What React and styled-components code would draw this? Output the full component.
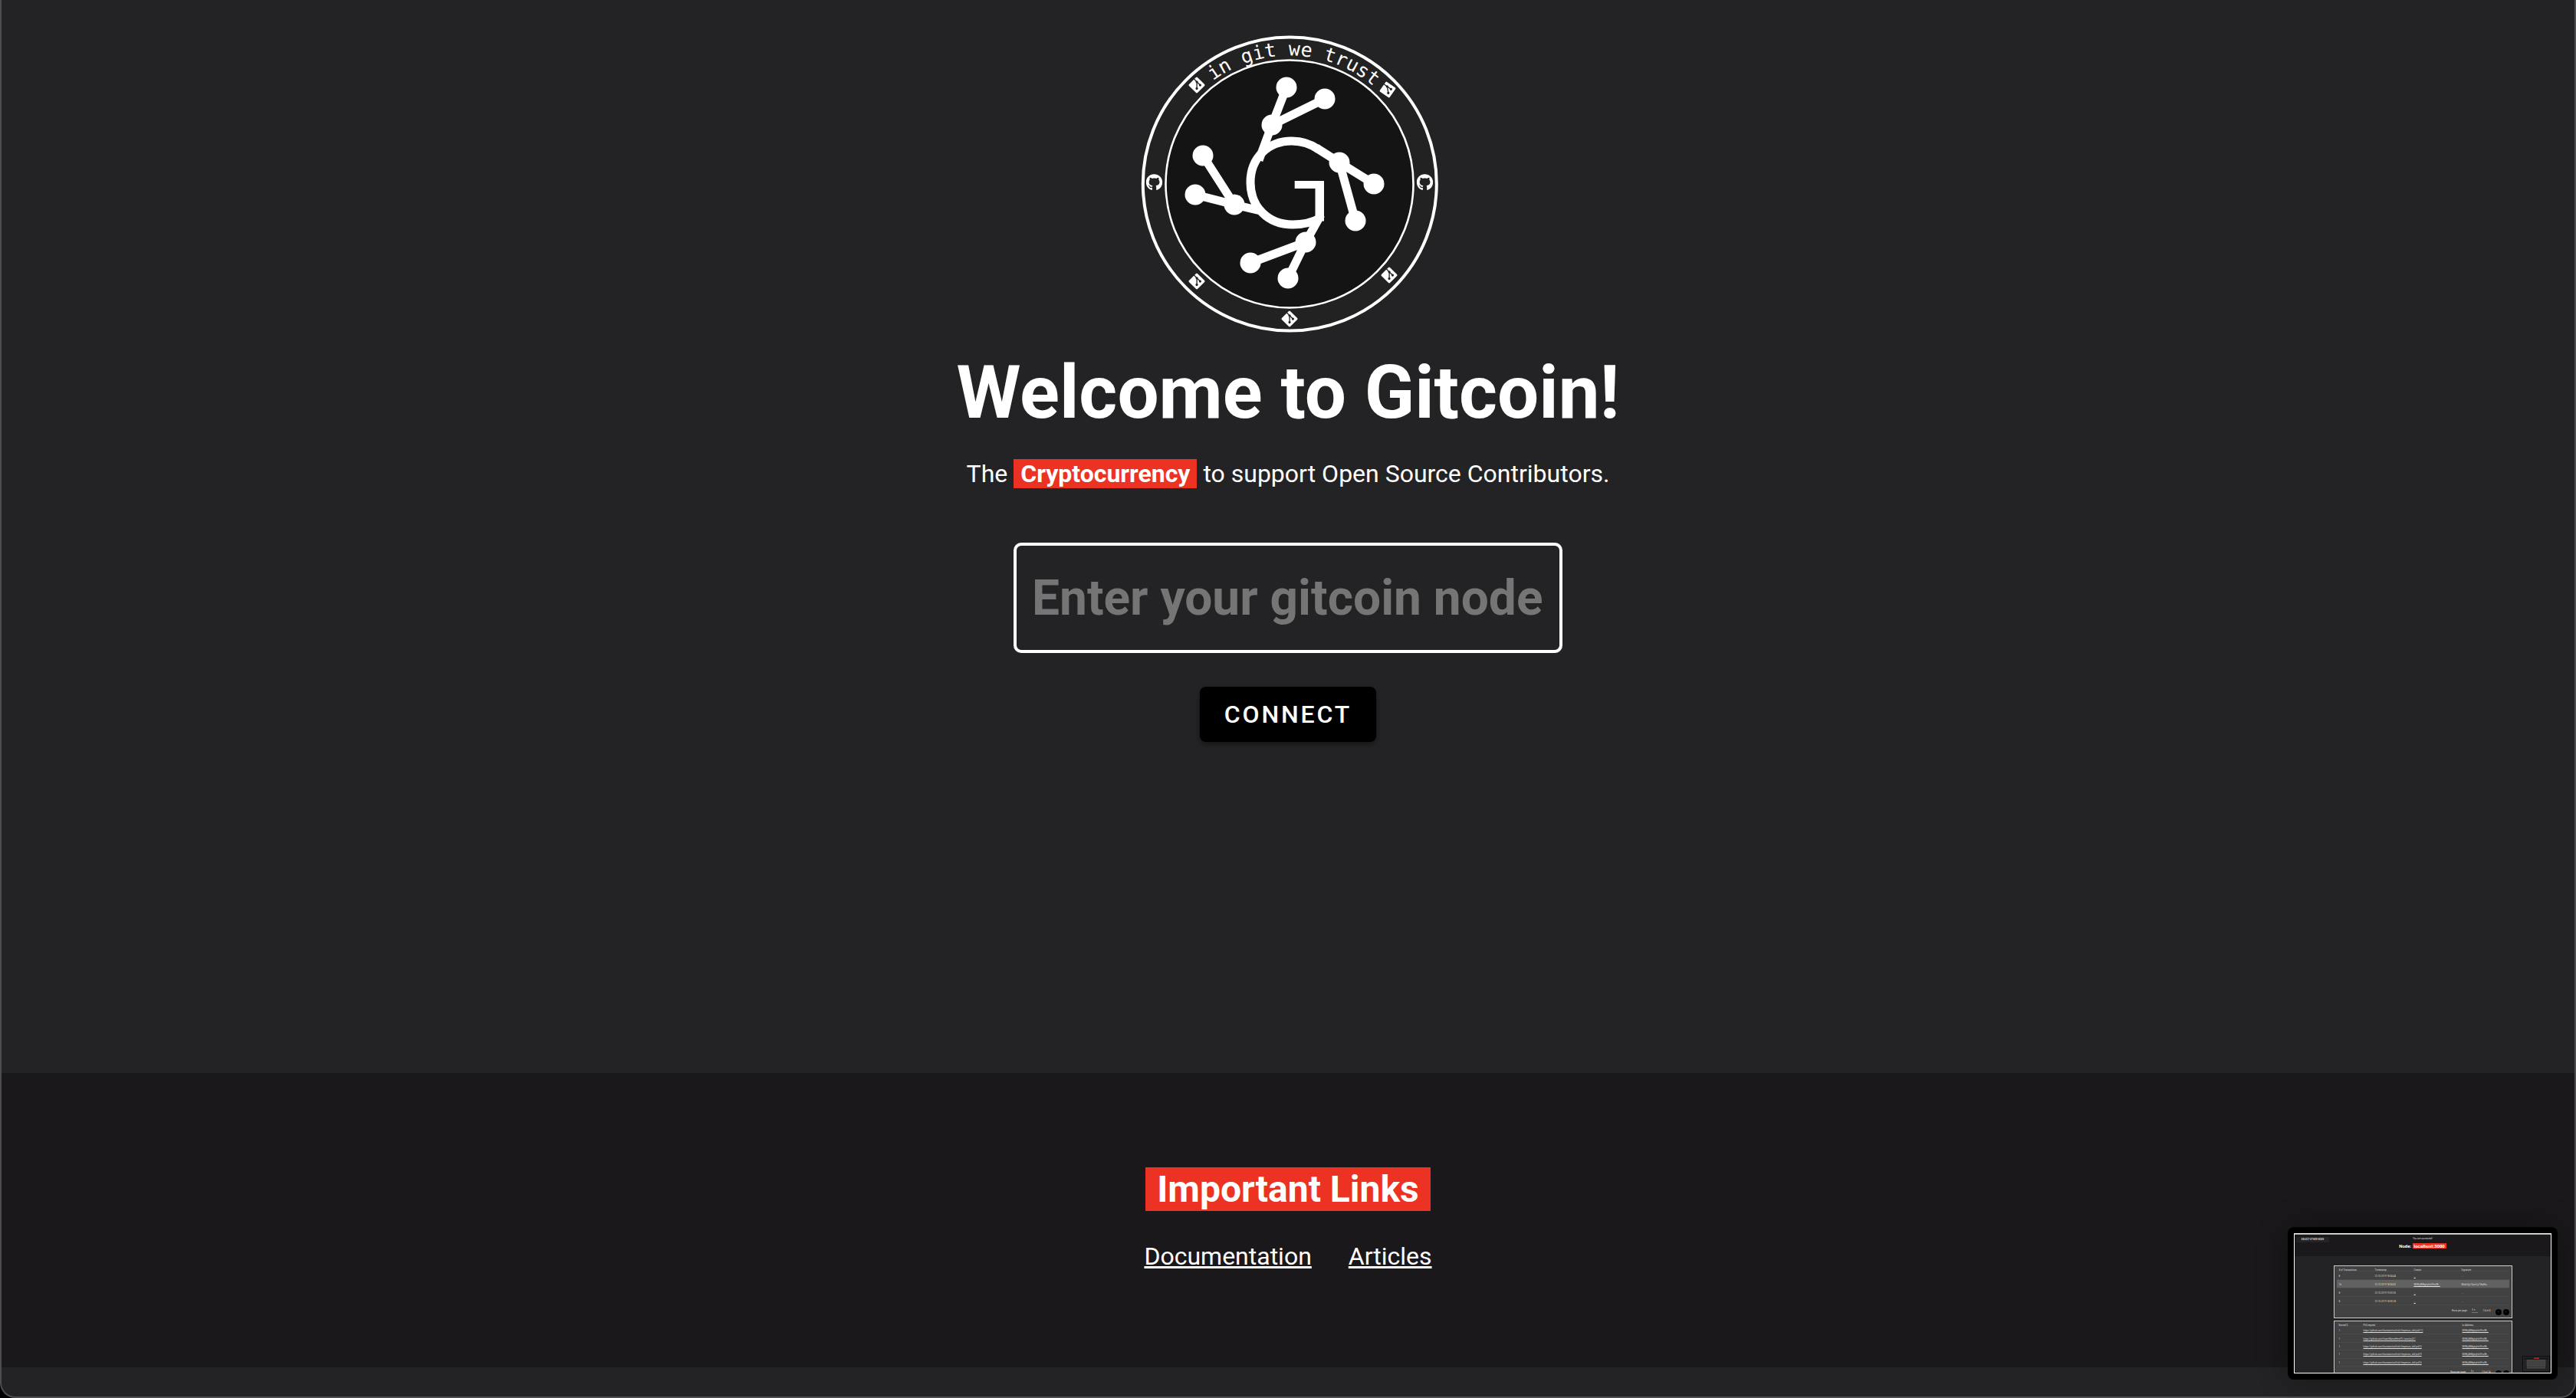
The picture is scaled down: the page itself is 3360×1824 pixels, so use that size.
import React from 'react';
import styled, { createGlobalStyle } from 'styled-components';
import { FaGitAlt, FaGithub } from 'react-icons/fa';


const GlobalStyle = createGlobalStyle`
  * {
    box-sizing: border-box;
  }

  body {
    margin: 0;
    background: #000;
    color: #fff;
    font-family: Roboto, sans-serif;
    font-size: 32px;
    line-height: 38px;
  }
`;

const Page = styled.div`
  position: relative;
  display: flex;
  flex-direction: column;
  min-height: 100vh;
  padding-bottom: 38px;
  border: 2px solid #4d4d4f;
  border-top: 0;
  border-radius: 0 0 20px 20px;
  background: #232325;
`;

const Main = styled.main`
  display: flex;
  flex: 1;
  flex-direction: column;
  align-items: center;
  padding: 46px 24px;
`;

const LogoSvg = styled.svg`
  width: 392px;
  height: 388px;

  text {
    fill: #fff;
    font-family: 'DejaVu Sans Mono', monospace;
    font-size: 25px;
  }
`;

const Title = styled.h1`
  margin: 22px 0 31px;
  font-size: 96px;
  font-weight: 700;
  line-height: 112px;
`;

const Intro = styled.p`
  margin: 0 0 71px;
`;

const Highlight = styled.span`
  padding: 0 ${({ $space }) => $space || 9}px;
  background: #ec3323;
  font-weight: 700;
`;

const NodeForm = styled.form`
  display: flex;
  flex-direction: column;
  align-items: center;
  gap: 44px;
`;

const NodeInput = styled.input`
  width: 716px;
  max-width: 100%;
  height: 144px;
  padding: 0 20px;
  border: 4px solid #fff;
  border-radius: 10px;
  outline: none;
  background: transparent;
  color: #fff;
  font-family: inherit;
  font-size: 64px;
  font-weight: 700;

  &::placeholder {
    color: #757575;
  }
`;

const ConnectButton = styled.button`
  height: 72px;
  padding: 0 32px;
  border: 0;
  border-radius: 8px;
  background: #000;
  box-shadow: 0 3px 6px rgba(0, 0, 0, 0.4);
  color: #fff;
  font-family: inherit;
  font-size: 32px;
  font-weight: 500;
  letter-spacing: 0.09em;
  text-transform: uppercase;
`;

const Footer = styled.footer`
  display: flex;
  flex-direction: column;
  align-items: center;
  padding: 124px 24px 126px;
  background: #1b181b;
`;

const FooterTitle = styled.h2`
  margin: 0 0 40px;
  font-size: 48px;
  line-height: 56px;
`;

const FooterLinks = styled.nav`
  display: flex;
  gap: 48px;

  a {
    color: #fff;
  }
`;

const Preview = styled.aside`
  position: absolute;
  right: 22px;
  bottom: 22px;
  width: 352px;
  height: 199px;
  padding: 8px;
  border-radius: 8px;
  background: #000;
  box-shadow: 0 0 40px rgba(0, 0, 0, 0.3);
`;

const Screen = styled.div`
  position: relative;
  height: 100%;
  overflow: hidden;
  border: 1px solid #fff;
  background: #232325;
  color: #ddd;
  font-size: 3px;
  line-height: 4px;
`;

const ScreenHeader = styled.header`
  display: grid;
  grid-template-columns: 1fr auto 1fr;
  height: 29px;
  padding: 3px 2px 0;
  border-top: 1px solid #999;
  background: #1b181b;
  text-align: center;
`;

const SmallButton = styled.button`
  justify-self: start;
  width: 43px;
  height: 7px;
  padding: 0;
  border: 0;
  border-radius: 1px;
  background: #232325;
  color: #ccc;
  font: 700 3px/7px Roboto, sans-serif;
  text-transform: uppercase;
`;

const Host = styled.h3`
  margin: 4px 0 0;
  color: #fff;
  font-size: 6px;
  line-height: 8px;
`;

const Panel = styled.section`
  width: 233px;
  margin: ${({ $first }) => ($first ? 12 : 3)}px auto 0;
  padding: 3px;
  border: 1px solid #ccc;
  background: #424242;

  table {
    width: 100%;
    height: ${({ $height }) => $height}px;
    border-collapse: collapse;
    table-layout: fixed;
  }

  th,
  td {
    padding: 0 3px;
    box-shadow: inset 0 -1px #4a4a4a;
    font-weight: 400;
    text-align: left;
    white-space: nowrap;
  }

  a {
    color: inherit;
  }
`;

const Row = styled.tr`
  background: ${({ $active }) => ($active ? '#616161' : 'transparent')};
`;

const Pager = styled.div`
  display: flex;
  align-items: center;
  justify-content: flex-end;
  height: 13px;

  label {
    margin-right: 6px;
  }

  select {
    width: 8px;
    height: 7px;
    margin-right: 6px;
    padding: 0;
    border: 0;
    border-bottom: 1px solid #777;
    appearance: none;
    background: transparent;
    color: inherit;
    font: 3px/4px Roboto, sans-serif;
  }

  span {
    margin-right: 4px;
  }

  button {
    align-self: flex-end;
    width: 8px;
    height: 8px;
    margin-left: 2px;
    padding: 0;
    border: 0;
    border-radius: 50%;
    background: #000;
    color: #aaa;
    font: 4px/8px Roboto, sans-serif;
  }
`;

const Nested = styled.svg`
  position: absolute;
  right: 1px;
  bottom: 1px;
  width: 36px;
  height: 21px;
`;


const nodes = [
  [190, 68], [240, 83], [171, 117],
  [81, 157], [71, 208], [122, 221],
  [259, 166], [304, 194], [280, 242],
  [215, 270], [143, 297], [192, 317],
];

const gitMarks = [
  [73, 65, 0], [322, 71, -10], [73, 321, 0], [324, 313, 0], [194, 370, 0],
];

const Logo = () => (
  <LogoSvg viewBox="-4 0 392 388" role="img" aria-label="Gitcoin">
    <circle cx="194.3" cy="194" r="191.5" fill="#222222" stroke="#fff" strokeWidth="4" />
    <circle cx="194" cy="194" r="161.5" fill="#141414" stroke="#fff" strokeWidth="2.6" />
    <path id="motto" d="M 56.5 98.5 A 167.5 167.5 0 0 1 332 98.5" fill="none" />
    <text textAnchor="middle" transform="rotate(2 194 194)">
      <textPath href="#motto" startOffset="50%">in git we trust</textPath>
    </text>
    <g fill="none" stroke="#fff" strokeWidth="11">
      <path d="M200.7 195H233V242" strokeWidth="10" />
      <path d="M227.5 190V242.5H239V190Z" fill="#fff" stroke="none" />
      <path d="M233 239C222 245 210 247 198 247C166 247 143 224 143 192C143 160 166 138 197 138C211 138 222 142 232 149" />
      <path d="M190 68L171 117L154 163M171 117L240 83" />
      <path d="M81 157L122 221M71 208L122 221L156 229" />
      <path d="M229 147L259 166L304 194M259 166L280 242" />
      <path d="M235 234L215 270L192 317M215 270L143 297" />
    </g>
    {nodes.map(([x, y]) => (
      <circle key={`${x}-${y}`} cx={x} cy={y} r="13.5" fill="#fff" />
    ))}
    {gitMarks.map(([x, y, angle]) => (
      <g key={`${x}-${y}`} transform={`translate(${x} ${y}) rotate(${angle})`}>
        <FaGitAlt x="-12" y="-12" size={24} color="#fff" />
      </g>
    ))}
    <FaGithub x="6.5" y="181" size={22} color="#fff" />
    <FaGithub x="359.5" y="181" size={22} color="#fff" />
  </LogoSvg>
);

const blocks = [
  { count: 8, time: '23.10.2019 18:04:44' },
  { count: 16, time: '23.10.2019 18:04:43', creator: 'MIIBIjANBgkqhkiG9w0B...', signature: 'MoArQg1VjxwCy7iEqHla...' },
  { count: 8, time: '23.10.2019 19:03:35' },
  { count: 8, time: '23.10.2019 18:50:28' },
];

const pulls = [
  'https://github.com/konstantinullrich/freyenion_old/pull/12',
  'https://github.com/InsertNameHereITL/core/pull/1',
  'https://github.com/konstantinullrich/freyenion_old/pull/3',
  'https://github.com/konstantinullrich/freyenion_old/pull/9',
  'https://github.com/konstantinullrich/freyenion_old/pull/6',
];

const TablePager = ({ id, range }) => (
  <Pager>
    <label htmlFor={id}>Rows per page:</label>
    <select id={id} defaultValue="5">
      <option value="5">5 ▾</option>
    </select>
    <span>{range}</span>
    <button type="button" aria-label="Previous page">‹</button>
    <button type="button" aria-label="Next page">›</button>
  </Pager>
);

const NodePreview = () => (
  <Preview>
    <Screen>
      <ScreenHeader>
        <SmallButton type="button">Select other node</SmallButton>
        <div>
          You are connected!
          <Host>Node: <Highlight $space={2}>localhost:3000</Highlight></Host>
        </div>
      </ScreenHeader>
      <Panel $first $height={48}>
        <table>
          <colgroup>
            <col width="47" />
            <col width="51" />
            <col width="62" />
            <col />
          </colgroup>
          <thead>
            <tr>
              <th># of Transactions</th>
              <th>Timestamp</th>
              <th>Creator</th>
              <th>Signature</th>
            </tr>
          </thead>
          <tbody>
            {blocks.map(({ count, time, creator, signature }) => (
              <Row key={time} $active={!!creator}>
                <td>{count}</td>
                <td>{time}</td>
                <td><a href="#creator">{creator || '...'}</a></td>
                <td>{signature || '...'}</td>
              </Row>
            ))}
          </tbody>
        </table>
        <TablePager id="block-rows" range="1-4 of 4" />
      </Panel>
      <Panel $height={56}>
        <table>
          <colgroup>
            <col width="32" />
            <col width="129" />
            <col />
          </colgroup>
          <thead>
            <tr>
              <th>Earned $</th>
              <th>Pull request</th>
              <th>to Address</th>
            </tr>
          </thead>
          <tbody>
            {pulls.map((url) => (
              <Row key={url}>
                <td>1</td>
                <td><a href={url}>{url}</a></td>
                <td><a href="#address">MIIBIjANBgkqhkiG9w0B...</a></td>
              </Row>
            ))}
          </tbody>
        </table>
        <TablePager id="pull-rows" range="1-5 of 14" />
      </Panel>
      <Nested viewBox="0 0 36 21" aria-hidden="true">
        <rect width="36" height="21" rx="1" fill="#0c0c0d" />
        <rect x="1.5" y="1.5" width="33" height="18" fill="#232325" stroke="#444" strokeWidth="0.4" />
        <rect x="2" y="2" width="32" height="3" fill="#1b181b" />
        <rect x="15" y="2.5" width="7" height="1.4" fill="#ec3323" opacity="0.8" />
        <rect x="6" y="5.5" width="24" height="8" fill="#424242" stroke="#666" strokeWidth="0.4" />
        <rect x="6" y="14.5" width="24" height="2" fill="#4a4a4a" />
      </Nested>
    </Screen>
  </Preview>
);

const App = () => (
  <>
    <GlobalStyle />
    <Page>
      <Main>
        <Logo />
        <Title>Welcome to Gitcoin!</Title>
        <Intro>
          The <Highlight>Cryptocurrency</Highlight> to support Open Source Contributors.
        </Intro>
        <NodeForm>
          <NodeInput type="text" aria-label="Gitcoin node" placeholder="Enter your gitcoin node" />
          <ConnectButton type="button">Connect</ConnectButton>
        </NodeForm>
      </Main>
      <Footer>
        <FooterTitle><Highlight $space={15}>Important Links</Highlight></FooterTitle>
        <FooterLinks>
          <a href="#documentation">Documentation</a>
          <a href="#articles">Articles</a>
        </FooterLinks>
      </Footer>
      <NodePreview />
    </Page>
  </>
);


export default App;
